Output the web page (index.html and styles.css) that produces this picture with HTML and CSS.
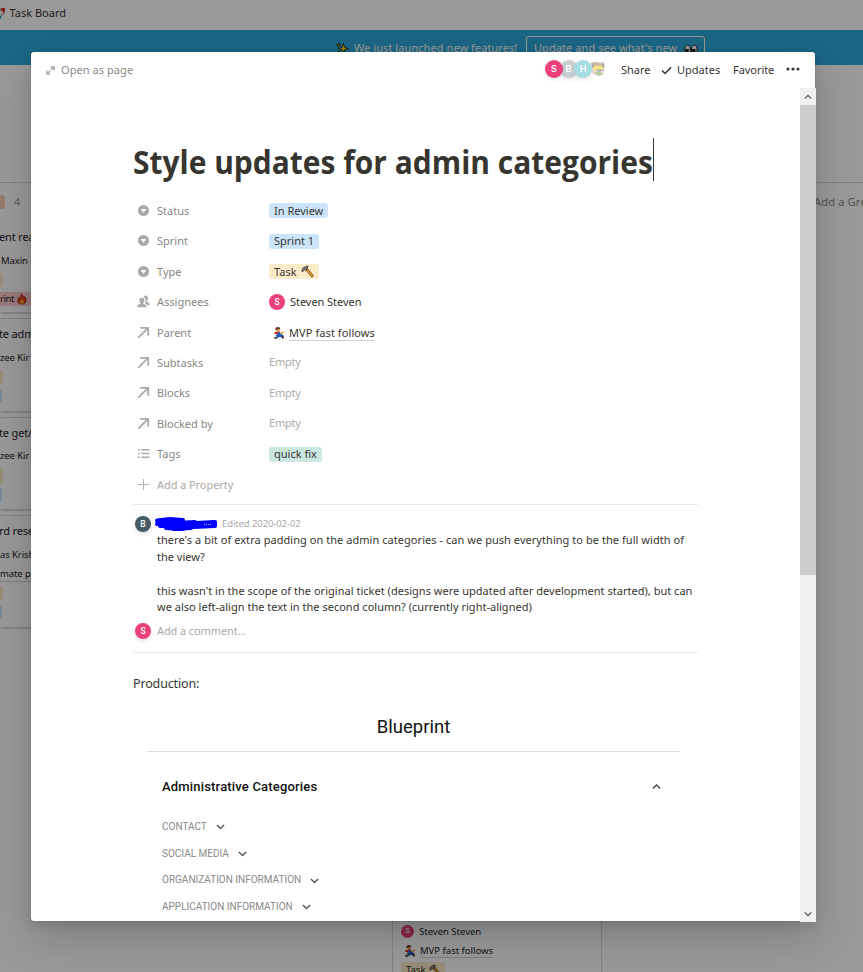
FILE: index.html
```html
<!DOCTYPE html>
<html lang="en">
<head>
<meta charset="utf-8">
<title>Task Board</title>
<link rel="stylesheet" href="styles.css">
</head>
<body>
<svg width="0" height="0" class="defs" aria-hidden="true">
  <defs>
    <symbol id="select" viewBox="0 0 14 14"><path fill="currentColor" fill-rule="evenodd" d="M7 1a6 6 0 1 1 0 12A6 6 0 0 1 7 1ZM3.900 5.300 7 9.500l3.100-4.200Z"/></symbol>
    <symbol id="arrow" viewBox="0 0 14 14"><path fill="none" stroke="currentColor" stroke-width="1.900" d="M1.500 12.500 11.400 2.600M3.500 1.900h8.600v8.600"/></symbol>
    <symbol id="people" viewBox="0 0 14 14"><g fill="currentColor"><path d="M9 .5c1.900 0 2.800 1.100 2.800 2.700S10.900 6 10.500 6.500v.9c1.300.5 3 .8 3 2.600v1H11c-.5-1.500-1.900-1.900-2.500-2.200.9-1.200 1.300-3.600.2-5.300-.4-.6-1-1-1.600-1.100C7.500 1 8.200.5 9 .5Z"/><path d="M5.300 3c1.900 0 2.700 1.200 2.700 2.700S7.200 8.200 6.800 8.700v.9c1.400.5 3.500.8 3.500 2.900v.8H.3v-.8c0-2.100 1.900-2.400 3.500-2.900v-.9c-.4-.5-1.200-1.500-1.200-3S3.500 3 5.300 3Z"/></g></symbol>
    <symbol id="list" viewBox="0 0 14 14"><path fill="none" stroke="currentColor" stroke-width="1.600" d="M1 3h2M4.500 3h9M1 7h2M4.500 7h9M1 11h2M4.500 11h9"/></symbol>
    <symbol id="plus" viewBox="0 0 14 14"><path fill="none" stroke="currentColor" stroke-width="1.200" d="M7 1v12M1 7h12"/></symbol>
    <symbol id="chevron" viewBox="0 0 10 6"><path fill="none" stroke="currentColor" stroke-width="1.500" d="m1 1 4 4 4-4"/></symbol>
    <symbol id="hammer" viewBox="0 0 14 14"><path fill="none" stroke="#6d3d12" stroke-width="3" stroke-linecap="round" d="m5.500 4 6.500 7.700"/><path fill="none" stroke="#f0a52c" stroke-width="1.600" stroke-linecap="round" d="m6 4.500 6 7.200"/><path fill="#85857a" stroke="#34342f" stroke-width=".8" d="M.8 6.500 2 3.300 6.800.9l1 1-1.700 1.200.9 1.300-2 1.700-1.100-1.300-1.700 2.300Z"/></symbol>
    <symbol id="hero" viewBox="0 0 14 14"><path fill="#d42b22" d="M2 5.500 1.500 8 5 9l1-3Z"/><circle cx="5.500" cy="3.300" r="2.300" fill="#e79a35"/><path fill="#63301a" d="M2.500 3.500 3.300.7 6.500 0l2 1.200-.5 1-3 .3Z"/><path fill="none" stroke="#d42b22" stroke-width="2" d="m5 6 3 .5"/><path fill="none" stroke="#2059b5" stroke-width="3.600" d="m6 6.500 1.800 3L4 11.500M8 9.500l3 1.500"/><path fill="none" stroke="#e79a35" stroke-width="1.600" d="m8.500 6.500 2.300.7 1.700-1.700"/><path stroke="#3b2520" stroke-width="2" d="m1.500 12.300 3 .8M11.500 10v3.500"/></symbol>
    <symbol id="fire" viewBox="0 0 12 14"><path fill="#e8401b" stroke="#8e1d08" stroke-width=".6" d="M5.500.8C7.500 2.500 7 4.600 8.800 5.600l.5-1.800c3.100 4.700 2.200 9.400-3.300 9.400S-.6 8.800 2.300 5.200l1 1.600C4.500 5 3.800 2.700 5.500.8Z"/><path fill="#ffb629" d="M6 6.500c0 2 2.700 2.500 2.100 4.600-.7 2-4 2-4.500 0C3.200 9.300 5.500 8.700 6 6.500Z"/></symbol>
  </defs>
</svg>

<div class="app">
  <header class="topbar">
    <svg class="rocket" viewBox="0 0 14 14"><path fill="#ececec" stroke="#555" stroke-width=".8" d="M12.500 1.500C8 1 4 4 3 9l2.500 2.500C10 10 13 7 12.500 1.500Z"/><path fill="#e11b1b" d="M12.800 1.200c-2 0-3.800.3-5 1.300l4 3.800c.9-1.300 1.200-3.200 1-5.100Z"/><path fill="#1689c4" d="m5.500 11.500 3.600-2-.8 3-2.300 1.300Z"/></svg>
    <span>Task Board</span>
  </header>
  <div class="banner">
    <svg class="sparkles" viewBox="0 0 14 14"><path fill="#ffe21f" stroke="#1e1a00" stroke-width=".9" d="m8 1.500 1.300 4.200L13.500 7 9.300 8.300 8 12.500 6.700 8.300 2.500 7l4.200-1.300ZM2.800 1l.6 1.600 1.600.6-1.600.6-.6 1.600-.6-1.600L.600 3.200l1.600-.6ZM3 9.200l.5 1.300 1.300.5-1.300.5L3 12.800l-.5-1.300-1.300-.5 1.300-.5Z"/></svg>
    <span class="launch">We just launched new features!</span>
    <span class="banner-button"><span>Update and see what's new</span>
      <svg class="eyes" viewBox="0 0 14 12"><g fill="#fff" stroke="#222"><ellipse cx="3.600" cy="6" rx="2.800" ry="4.800"/><ellipse cx="10.300" cy="6" rx="2.800" ry="4.800"/></g><path fill="#111" d="M1.500 5h3.200v4H1.500ZM8.200 5h3.200v4H8.200Z"/></svg>
    </span>
  </div>
  <main class="board">
    <section class="column first">
      <div class="column-head"><i class="chip orange"></i><span>4</span></div>
      <article class="card c1"><h3>ent rea</h3><p class="maxin">Maxin</p><i class="chip yellow"></i><div class="fire-tag"><span>rint</span><svg><use href="#fire"/></svg></div></article>
      <article class="card c2"><h3>te adm</h3><p>zee Kir</p><i class="chip yellow"></i><i class="chip blue"></i></article>
      <article class="card c3"><h3>te get/</h3><p>zee Kir</p><i class="chip yellow"></i><i class="chip blue"></i></article>
      <article class="card c4"><h3>rd rese</h3><p>as Krish</p><p class="link">mate p</p><i class="chip yellow"></i><i class="chip blue"></i></article>
    </section>
    <section class="column second">
      <article class="card">
        <div class="mini"><b class="avatar pink">S</b><span>Steven Steven</span></div>
        <div class="mini"><svg class="mini-hero"><use href="#hero"/></svg><span class="link">MVP fast follows</span></div>
        <div class="mini-tag"><span>Task</span><svg><use href="#hammer"/></svg></div>
      </article>
    </section>
    <div class="add-group">Add a Group</div>
  </main>
</div>

<div class="overlay">
  <div class="modal">
    <header class="modal-head">
      <svg class="expand" viewBox="0 0 10 10"><g fill="none" stroke="currentColor" stroke-width="1.600"><path d="M5 1h4v4M8.700 1.200 5.500 4.400M5 9H1V5M1.200 8.800l3.200-3.200"/></g></svg>
      <span class="open">Open as page</span>
      <div class="faces"><b class="avatar pink">S</b><b class="avatar slate faded">B</b><b class="avatar teal faded">H</b>
        <svg class="photo" viewBox="0 0 18 18"><path fill="#eadfd9" d="M3 2h12l2 4-1 8-5 3-7-2L1 9Z"/><path fill="#d0b7a8" d="m2 3 5-1 6 2 3-2-1 6H4Z"/><path fill="#f6e486" d="M4 6h11l-1 5H5Z"/><path fill="#a5a7a5" d="M3 5h2v3H3ZM14 4h2v4h-2ZM8 10h8l-3 2H9Z"/><path fill="#b6ca9b" d="m5 13 6-1 4 3-5 2Z"/></svg></div>
      <span class="share">Share</span>
      <svg class="check" viewBox="0 0 12 10"><path fill="none" stroke="currentColor" stroke-width="1.700" d="m1 5 3.300 3.300L11 1.500"/></svg>
      <span class="updates">Updates</span>
      <span class="favorite">Favorite</span>
      <svg class="dots" viewBox="0 0 14 4"><g fill="currentColor"><circle cx="2" cy="2" r="1.600"/><circle cx="7" cy="2" r="1.600"/><circle cx="12" cy="2" r="1.600"/></g></svg>
    </header>
    <div class="modal-body">
      <div class="content">
        <h1><span>Style updates for admin categories</span><i class="caret"></i></h1>
        <div class="props">
          <div class="prop"><svg><use href="#select"/></svg><label>Status</label><span class="tag blue">In Review</span></div>
          <div class="prop"><svg><use href="#select"/></svg><label>Sprint</label><span class="tag blue">Sprint 1</span></div>
          <div class="prop"><svg><use href="#select"/></svg><label>Type</label><span class="tag yellow">Task <svg><use href="#hammer"/></svg></span></div>
          <div class="prop"><svg><use href="#people"/></svg><label>Assignees</label><span class="person"><b class="avatar pink">S</b><span>Steven Steven</span></span></div>
          <div class="prop"><svg><use href="#arrow"/></svg><label>Parent</label><span class="parent"><svg><use href="#hero"/></svg><span class="link">MVP fast follows</span></span></div>
          <div class="prop"><svg><use href="#arrow"/></svg><label>Subtasks</label><span class="empty">Empty</span></div>
          <div class="prop"><svg><use href="#arrow"/></svg><label>Blocks</label><span class="empty">Empty</span></div>
          <div class="prop"><svg><use href="#arrow"/></svg><label>Blocked by</label><span class="empty">Empty</span></div>
          <div class="prop"><svg><use href="#list"/></svg><label>Tags</label><span class="tag green">quick fix</span></div>
          <div class="prop add"><svg><use href="#plus"/></svg><label>Add a Property</label></div>
        </div>
        <section class="comments">
          <div class="comment-head"><b class="avatar slate">B</b>
            <svg class="scribble" viewBox="0 0 64 16"><path fill="none" stroke="#00f" stroke-width="4" stroke-linecap="round" stroke-linejoin="round" d="M3 4.500 16 3l13 1-23 1 24 1L3 8l38-2-35 4 36-2-30 3 29-1-22 3 18-1M12 12l16 1 12-2 21-1V6l-20 2M60 6l-17 1"/><path stroke="#eef" stroke-width=".7" stroke-dasharray="1 1" d="M50 8.500h8"/></svg>
            <span class="edited">Edited 2020-02-02</span></div>
          <div class="comment-text"><p class="l1">there's a bit of extra padding on the admin categories - can we push everything to be the full width of</p><p>the view?</p><p class="l3">this wasn't in the scope of the original ticket (designs were updated after development started), but can</p><p class="l4">we also left-align the text in the second column? (currently right-aligned)</p></div>
          <div class="add-comment"><b class="avatar pink">S</b><span>Add a comment...</span></div>
        </section>
        <p class="production">Production:</p>
        <section class="shot">
          <h2>Blueprint</h2>
          <div class="shot-head"><h3>Administrative Categories</h3><svg class="up"><use href="#chevron"/></svg></div>
          <ul>
            <li><span>CONTACT</span><svg><use href="#chevron"/></svg></li>
            <li><span>SOCIAL MEDIA</span><svg><use href="#chevron"/></svg></li>
            <li><span>ORGANIZATION INFORMATION</span><svg><use href="#chevron"/></svg></li>
            <li><span>APPLICATION INFORMATION</span><svg><use href="#chevron"/></svg></li>
          </ul>
        </section>
      </div>
      <div class="scrollbar"><svg class="up"><use href="#chevron"/></svg><i class="thumb"></i><svg class="down"><use href="#chevron"/></svg></div>
    </div>
  </div>
</div>
</body>
</html>
```
FILE: styles.css
```css
* { box-sizing: border-box; }
body, h1, h2, h3, p, ul { margin: 0; padding: 0; }
body { width: 863px; height: 972px; overflow: hidden; font: 11px/16px "Noto Sans", "Open Sans", sans-serif; color: #37352f; position: relative; }
svg { display: block; flex: none; overflow: visible; }
.defs { position: absolute; }
i { display: block; }
b { font-weight: 500; }

.app { height: 972px; background: #fff; overflow: hidden; }
.topbar { height: 30px; display: flex; align-items: center; padding-bottom: 4px; }
.topbar span { font-size: 11px; }
.rocket { width: 13px; height: 13px; margin: 0 3.500px 0 -7px; }
.banner { height: 35px; background: #2eaadc; color: #fff; display: flex; align-items: flex-start; padding: 6px 0 0 336px; }
.sparkles { width: 13px; height: 13px; margin: 6px 5px 0 0; }
.launch { width: 172px; padding-top: 4px; white-space: nowrap; letter-spacing: .07px; }
.banner-button { width: 179px; height: 25px; border: 1px solid #fff; border-radius: 3px; display: flex; padding: 3px 6px 0 7px; justify-content: space-between; white-space: nowrap; letter-spacing: .07px; }
.eyes { width: 14px; height: 12px; margin-top: 4px; }

.board { height: 907px; margin-top: 117px; border-top: 1px solid #d9d9d9; display: grid; grid-template-columns: 392px 422px 1fr; align-items: start; }
.column.first { width: 209px; }
.column-head { display: flex; height: 38px; align-items: center; gap: 9px; color: #999; font-size: 11px; }
.chip { width: 3px; height: 14px; border-radius: 0 3px 3px 0; margin-bottom: 5px; }
.column-head .chip { width: 5px; margin: 0; }
.chip.yellow { background: #fbecc9; }
.chip.blue { background: #cce4f9; width: 2px; }
.chip.orange { background: #facdb4; }
.card { border: 1px solid #d8d8d8; box-shadow: 0 1px 1px #ddd; border-radius: 3px; margin-bottom: 5px; overflow: hidden; white-space: nowrap; color: #222; }
.first .card { border-left: 0; padding-top: 7px; height: 93.500px; }
.card h3 { font-size: 11px; font-weight: 400; line-height: 16px; margin: 0 0 7.500px -1px; letter-spacing: -.15px; }
.card p { font-size: 9.5px; line-height: 15px; margin-bottom: 5.500px; letter-spacing: -.1px; }
.first .c1 { height: 92px; border-top-color: transparent; padding-top: 7px; margin-bottom: 5px; }
.first .c1 p { margin-left: 1px; }
.first .c4 { height: 113px; }
.first .c4 p { margin-bottom: 4px; }
.fire-tag { display: flex; align-items: center; width: 31px; height: 14px; background: #ffccd1; font-size: 9.5px; border-radius: 0 3px 3px 0; gap: 3px; letter-spacing: -.4px; line-height: 14px; }
.fire-tag svg { width: 10px; height: 12px; }
.link { border-bottom: 1px solid #d2d1cf; }
.second .card { width: 210px; height: 880px; padding: 738px 8px 0; }
.mini { display: flex; align-items: center; height: 19px; gap: 5px; font-size: 9.5px; }
.mini .avatar { width: 13px; height: 13px; font-size: 7px; margin-bottom: 1px; }
.mini .link { line-height: 13px; }
.mini-hero { width: 12px; height: 12px; margin-left: 3px; margin-right: -1px; }
.mini-tag { display: flex; width: 44px; height: 15px; align-items: center; gap: 4px; padding-left: 5px; margin-top: 2px; border-radius: 3px; background: #fbecc9; font-size: 9.5px; }
.mini-tag svg { width: 12px; height: 12px; }
.add-group { padding-top: 11px; color: #888; white-space: nowrap; overflow: hidden; letter-spacing: .2px; }

.overlay { position: absolute; inset: 0; background: rgba(0, 0, 0, .4); padding: 52px 0 0 31px; }
.modal { width: 784px; height: 869px; background: #fff; border-radius: 3px; box-shadow: 0 0 0 1px rgba(15, 15, 15, .05), 0 5px 10px rgba(15, 15, 15, .1), 0 15px 40px rgba(15, 15, 15, .2); }
.modal-head { height: 36px; display: flex; align-items: center; padding-left: 15px; white-space: nowrap; }
.expand { width: 9px; height: 9px; color: #aaa; margin-right: 6px; }
.open { color: #8a8986; width: 484px; letter-spacing: .06px; }
.avatar { display: flex; align-items: center; justify-content: center; width: 16px; height: 16px; border-radius: 50%; color: #fff; font: 500 8.5px/1 Roboto, sans-serif; flex: none; }
.pink { background: #ec407a; }
.slate { background: #455a64; }
.comments .avatar { box-shadow: 0 2px 4px rgba(0, 0, 0, .13); }
.faces { display: flex; width: 76px; margin-bottom: 2px; }
.faces .avatar { width: 18px; height: 18px; margin-right: -3.500px; box-shadow: 0 2px 4px rgba(0, 0, 0, .1); font-size: 9.5px; position: relative; z-index: 1; }
.faces .pink { z-index: 3; }
.faces .slate { background: #c7cdd0; }
.faces .teal { background: #a4dce1; z-index: 2; }
.photo { width: 17px; height: 17px; }
.share { width: 40px; }
.check { width: 11px; height: 9px; margin-right: 5px; }
.updates { width: 56px; }
.favorite { width: 53px; letter-spacing: -.05px; }
.dots { width: 14px; height: 4px; margin-bottom: 2px; }
.modal-body { height: 834px; display: flex; overflow: hidden; width: 785px; }
.content { width: 769px; padding: 50px 0 0 102px; }
h1 { display: flex; align-items: center; height: 43px; font: 700 32px/44px "Open Sans", sans-serif; white-space: nowrap; }
h1 span { width: 520px; padding-top: 4px; transform: scaleX(.936); transform-origin: left; }
.caret { width: 1px; height: 43px; background: #37352f; }
.props { width: 565px; margin-top: 14.800px; height: 309.200px; border-bottom: 1px solid #e9e9e8; }
.prop { display: flex; align-items: center; height: 30.400px; }
.prop > svg { width: 13px; height: 13px; margin: 0 7px 1px 4px; color: #aaa9a7; }
.prop label { width: 112px; color: #878683; }
.tag { display: flex; align-items: center; height: 15px; padding: 0 5px; border-radius: 3px; gap: 4px; white-space: nowrap; }
.tag svg { width: 13px; height: 13px; }
.tag.blue { background: #cce4f9; }
.tag.yellow { background: #fbecc9; }
.tag.green { background: #cce7e1; }
.person { display: flex; gap: 5px; align-items: center; letter-spacing: -.05px; }
.parent { display: flex; align-items: center; gap: 4px; padding: 1px 0 0 4px; letter-spacing: .08px; }
.parent svg { width: 12px; height: 12px; }
.parent .link { line-height: 14px; }
.empty { color: #aaa9a7; letter-spacing: -.2px; padding-bottom: 1px; }
.prop.add label { color: #aaa9a7; letter-spacing: -.07px; }
.prop.add svg { color: #b5b4b2; }
.comments { width: 565px; height: 148px; padding: 10.500px 0 0 2px; border-bottom: 1px solid #e9e9e8; }
.comment-head { display: flex; align-items: center; height: 17px; }
.scribble { width: 64px; height: 16px; margin-left: 3px; }
.edited { font-size: 9.5px; color: #aaa9a7; margin-left: 4px; letter-spacing: -.1px; }
.comment-text { padding-left: 22px; white-space: nowrap; margin-top: -.5px; }
.comment-text p { line-height: 16.700px; }
.comment-text .l1 { letter-spacing: .047px; }
.comment-text .l3 { margin-top: 17.400px; letter-spacing: .02px; }
.comment-text .l4 { margin-top: -.7px; letter-spacing: .015px; }
.add-comment { display: flex; align-items: center; gap: 6px; margin-top: 7.500px; color: #aaa9a7; height: 16px; letter-spacing: -.1px; }
.production { font-size: 12.500px; line-height: 20px; margin-top: 21px; letter-spacing: -.15px; }
.shot { font-family: Roboto, sans-serif; width: 565px; padding: 22px 18px 0 14px; height: 230px; }
.shot h2 { font-size: 18.500px; font-weight: 400; line-height: 21px; padding-top: 1px; text-align: center; height: 36px; border-bottom: 1px solid #ddd; color: #111; }
.shot-head { display: flex; justify-content: space-between; align-items: center; margin-top: 25px; padding: 0 19.500px 0 15px; height: 20px; }
.shot-head h3 { font-size: 13px; font-weight: 500; color: #111; letter-spacing: .18px; }
.shot-head svg { width: 9px; height: 5.500px; color: #444; }
.up { transform: rotate(180deg); }
.shot ul { list-style: none; padding: 16.700px 0 0 15px; }
.shot li { display: flex; align-items: center; gap: 9px; height: 26.700px; color: #888; font-size: 10px; }
.shot li svg { width: 9px; height: 5.500px; color: #555; }
.scrollbar { width: 16px; background: #f0f0f0; display: flex; flex-direction: column; align-items: center; height: 834px; padding: 6px 0 5px; color: #505050; }
.scrollbar svg { width: 8px; height: 6px; }
.thumb { width: 16px; height: 470px; background: #cdcdcd; margin: 5px 0 auto; }
```
